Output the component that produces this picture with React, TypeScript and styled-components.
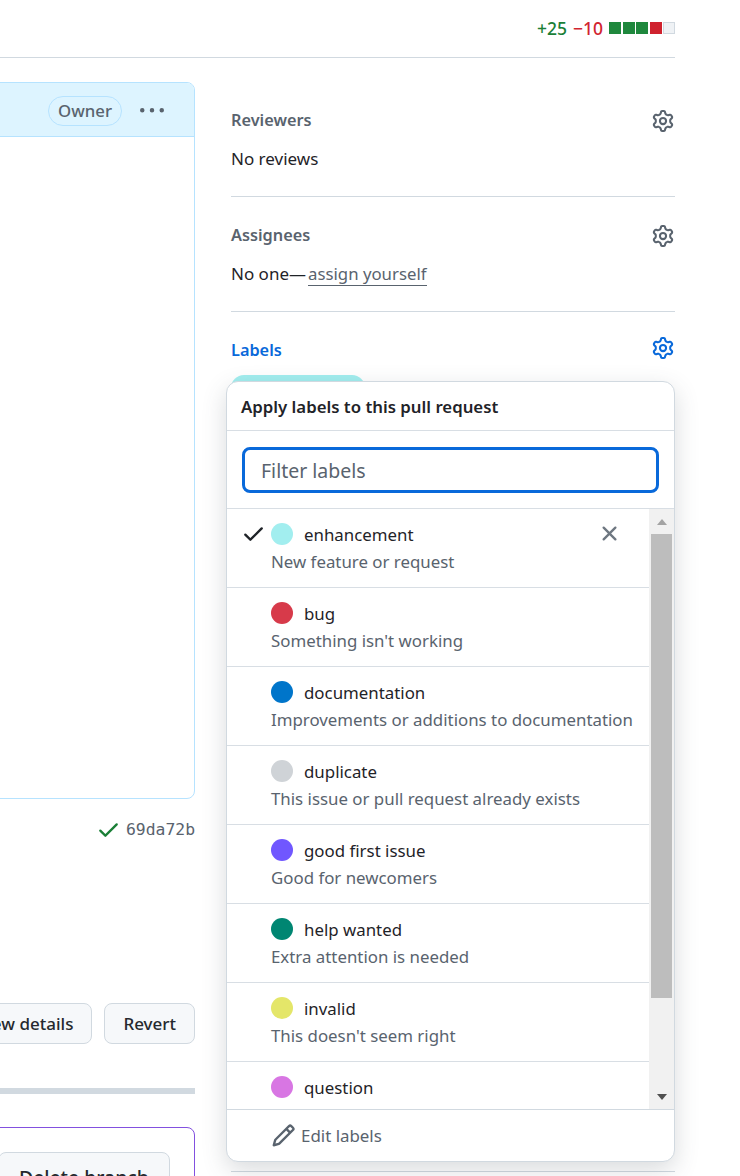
import React from 'react';
import styled, { createGlobalStyle } from 'styled-components';

const GlobalStyle = createGlobalStyle`
  html, body {
    margin: 0;
    padding: 0;
    background: #fff;
  }
  body {
    font-family: "Noto Sans", "Liberation Sans", sans-serif;
    color: #1f2328;
  }
`;

const ICONS = {
  gear: 'M8 0a8.2 8.2 0 0 1 .701.031C9.444.095 9.99.645 10.16 1.29l.288 1.107c.018.066.079.158.212.224.231.114.454.243.668.386.123.082.233.09.299.071l1.103-.303c.644-.176 1.392.021 1.82.63.27.385.506.792.704 1.218.315.675.111 1.422-.364 1.891l-.814.806c-.049.048-.098.147-.088.294.016.257.016.515 0 .772-.01.147.038.246.088.294l.814.806c.475.469.679 1.216.364 1.891a7.977 7.977 0 0 1-.704 1.217c-.428.61-1.176.807-1.82.63l-1.102-.302c-.067-.019-.177-.011-.3.071a5.909 5.909 0 0 1-.668.386c-.133.066-.194.158-.211.224l-.29 1.106c-.168.646-.715 1.196-1.458 1.26a8.006 8.006 0 0 1-1.402 0c-.743-.064-1.289-.614-1.458-1.26l-.289-1.106c-.018-.066-.079-.158-.212-.224a5.738 5.738 0 0 1-.668-.386c-.123-.082-.233-.09-.299-.071l-1.103.303c-.644.176-1.392-.021-1.82-.63a8.12 8.12 0 0 1-.704-1.218c-.315-.675-.111-1.422.363-1.891l.815-.806c.05-.048.098-.147.088-.294a6.214 6.214 0 0 1 0-.772c.01-.147-.038-.246-.088-.294l-.815-.806C.635 6.045.431 5.298.746 4.623a7.92 7.92 0 0 1 .704-1.217c.428-.61 1.176-.807 1.82-.63l1.102.302c.067.019.177.011.3-.071.214-.143.437-.272.668-.386.133-.066.194-.158.211-.224l.29-1.106C6.009.645 6.556.095 7.299.03 7.53.01 7.764 0 8 0Zm-.571 1.525c-.036.003-.108.036-.137.146l-.289 1.105c-.147.561-.549.967-.998 1.189-.173.086-.34.183-.5.29-.417.278-.97.423-1.529.27l-1.103-.303c-.109-.03-.175.016-.195.045-.22.312-.412.644-.573.99-.014.031-.021.11.059.19l.815.806c.411.406.562.957.53 1.456a4.709 4.709 0 0 0 0 .582c.032.499-.119 1.05-.53 1.456l-.815.806c-.081.08-.073.159-.059.19.162.346.353.677.573.989.02.03.085.076.195.046l1.102-.303c.56-.153 1.113-.008 1.53.27.161.107.328.204.501.29.447.222.85.629.997 1.189l.289 1.105c.029.109.101.143.137.146a6.6 6.6 0 0 0 1.142 0c.036-.003.108-.036.137-.146l.289-1.105c.147-.561.549-.967.998-1.189.173-.086.34-.183.5-.29.417-.278.97-.423 1.529-.27l1.103.303c.109.029.175-.016.195-.045.22-.313.411-.644.573-.99.014-.031.021-.11-.059-.19l-.815-.806c-.411-.406-.562-.957-.53-1.456a4.709 4.709 0 0 0 0-.582c-.032-.499.119-1.05.53-1.456l.815-.806c.081-.08.073-.159.059-.19a6.464 6.464 0 0 0-.573-.989c-.02-.03-.085-.076-.195-.046l-1.102.303c-.56.153-1.113.008-1.53-.27a4.44 4.44 0 0 0-.501-.29c-.447-.222-.85-.629-.997-1.189l-.289-1.105c-.029-.11-.101-.143-.137-.146a6.6 6.6 0 0 0-1.142 0ZM11 8a3 3 0 1 1-6 0 3 3 0 0 1 6 0ZM9.5 8a1.5 1.5 0 1 0-3.001.001A1.5 1.5 0 0 0 9.5 8Z',
  check: 'M13.78 4.22a.75.75 0 0 1 0 1.06l-7.25 7.25a.75.75 0 0 1-1.06 0L2.22 9.28a.751.751 0 0 1 .018-1.042.751.751 0 0 1 1.042-.018L6 10.94l6.72-6.72a.75.75 0 0 1 1.06 0Z',
  x: 'M3.72 3.72a.75.75 0 0 1 1.06 0L8 6.94l3.22-3.22a.749.749 0 0 1 1.275.326.749.749 0 0 1-.215.734L9.06 8l3.22 3.22a.749.749 0 0 1-.326 1.275.749.749 0 0 1-.734-.215L8 9.06l-3.22 3.22a.751.751 0 0 1-1.042-.018.751.751 0 0 1-.018-1.042L6.94 8 3.72 4.78a.75.75 0 0 1 0-1.06Z',
  pencil: 'M11.013 1.427a1.75 1.75 0 0 1 2.474 0l1.086 1.086a1.75 1.75 0 0 1 0 2.474l-8.61 8.61c-.21.21-.47.364-.756.445l-3.251.93a.75.75 0 0 1-.927-.928l.929-3.25c.081-.286.235-.547.445-.758l8.61-8.61Zm.176 4.823L9.75 4.81l-6.286 6.287a.253.253 0 0 0-.064.108l-.558 1.953 1.953-.558a.253.253 0 0 0 .108-.064Zm1.238-3.763a.25.25 0 0 0-.354 0L10.811 3.75l1.439 1.44 1.263-1.263a.25.25 0 0 0 0-.354Z',
  kebab: 'M8 9a1.5 1.5 0 1 0 0-3 1.5 1.5 0 0 0 0 3ZM1.5 9a1.5 1.5 0 1 0 0-3 1.5 1.5 0 0 0 0 3Zm13 0a1.5 1.5 0 1 0 0-3 1.5 1.5 0 0 0 0 3Z',
};

const Icon = ({ name, size }: { name: keyof typeof ICONS; size: number }) => (
  <svg width={size} height={size} viewBox="0 0 16 16" fill="currentColor" aria-hidden="true">
    <path d={ICONS[name]} />
  </svg>
);

const Page = styled.div`
  box-sizing: border-box;
  width: 740px;
  height: 1176px;
  overflow: hidden;
  padding-right: 65px;
`;

const DiffBar = styled.div`
  box-sizing: border-box;
  height: 58px;
  padding-top: 15px;
  border-bottom: 1px solid #d1d9e0;
  display: flex;
  justify-content: flex-end;
  align-items: flex-start;
  font-size: 17.5px;
  line-height: 26px;
  font-weight: 500;
`;

const Added = styled.span`
  color: #1a7f37;
`;

const Removed = styled.span`
  color: #d1242f;
  margin-left: 6px;
`;

const Blocks = styled.div`
  display: flex;
  gap: 1.5px;
  margin: 7px 0 0 6px;
`;

const Block = styled.span<{ $kind: 'add' | 'del' | 'none' }>`
  box-sizing: border-box;
  width: 12px;
  height: 12px;
  background: ${(p) => (p.$kind === 'add' ? '#1f883d' : p.$kind === 'del' ? '#cf222e' : '#eff2f5')};
  border: ${(p) => (p.$kind === 'none' ? '1px solid #d1d9e0' : 'none')};
`;

const Columns = styled.div`
  display: grid;
  grid-template-columns: 195px 444px;
  column-gap: 36px;
`;

const Main = styled.div`
  width: 195px;
  padding-top: 24px;
`;

const Comment = styled.div`
  box-sizing: border-box;
  height: 717px;
  margin-left: -20px;
  border: 1px solid #b6e3ff;
  border-radius: 8px;
`;

const CommentHeader = styled.div`
  box-sizing: border-box;
  height: 54px;
  padding: 2px 30px 0 0;
  background: #ddf4ff;
  border-bottom: 1px solid #b6e3ff;
  border-radius: 7px 7px 0 0;
  display: flex;
  justify-content: flex-end;
  align-items: center;
  gap: 18px;
  color: #59636e;
`;

const OwnerBadge = styled.span`
  box-sizing: border-box;
  height: 30px;
  padding: 0 9px;
  border: 1px solid #b6e3ff;
  border-radius: 15px;
  font-size: 16.8px;
  line-height: 27px;
  font-weight: 500;
`;

const CommitLine = styled.div`
  display: flex;
  justify-content: flex-end;
  align-items: center;
  gap: 5px;
  margin-top: 19px;
  height: 22px;
  color: #1a7f37;
`;

const CommitHash = styled.span`
  font-family: "DejaVu Sans Mono", "Liberation Mono", monospace;
  font-size: 16.4px;
  color: #59636e;
`;

const Actions = styled.div`
  display: flex;
  justify-content: flex-end;
  gap: 12px;
  margin-top: 163px;
`;

const Button = styled.button<{ $large?: boolean }>`
  flex: none;
  box-sizing: border-box;
  height: ${(p) => (p.$large ? 50 : 41)}px;
  padding: 0 ${(p) => (p.$large ? 20 : 18)}px;
  background: #f6f8fa;
  border: 1px solid #d1d9e0;
  border-radius: 8px;
  font: 500 ${(p) => (p.$large ? 19.4 : 17)}px "Noto Sans", sans-serif;
  color: #25292e;
  white-space: nowrap;
`;

const Rule = styled.div`
  height: 6px;
  margin: 44px 0 33px -20px;
  background: #d1d9e0;
`;

const MergeBox = styled.div`
  box-sizing: border-box;
  height: 120px;
  margin-left: -20px;
  padding: 24px 24px 0 0;
  border: 1px solid #8250df;
  border-radius: 8px;
  display: flex;
  justify-content: flex-end;
  align-items: flex-start;
`;

const Sidebar = styled.aside`
  position: relative;
  padding-top: 24px;
`;

const Section = styled.section<{ $height: number; $top?: number }>`
  box-sizing: border-box;
  height: ${(p) => p.$height}px;
  padding-top: ${(p) => p.$top ?? 0}px;
  border-bottom: 1px solid #d1d9e0;
  margin-bottom: 24px;
`;

const SectionHead = styled.div<{ $active?: boolean }>`
  display: flex;
  justify-content: space-between;
  align-items: center;
  height: 28px;
  font-size: 16.3px;
  font-weight: 600;
  color: ${(p) => (p.$active ? '#0969da' : '#59636e')};

  svg {
    margin: ${(p) => (p.$active ? '0 1px 4px 0' : '2px 1px 0 0')};
  }
`;

const SectionBody = styled.p`
  margin: 11px 0 0;
  font-size: 17px;
  line-height: 28px;
  color: #1f2328;
`;

const AssignLink = styled.span`
  margin-left: 2px;
  font-size: 16.8px;
  color: #59636e;
  border-bottom: 1px solid #59636e;
`;

const LabelPill = styled.div`
  width: 134px;
  height: 26px;
  margin-top: 11px;
  border-radius: 13px;
  background: #a2eeef;
`;

const Popover = styled.div`
  position: absolute;
  left: -5px;
  top: 323px;
  box-sizing: border-box;
  width: 449px;
  height: 781px;
  display: flex;
  flex-direction: column;
  background: #fff;
  border: 1px solid #d1d9e0;
  border-radius: 12px;
  box-shadow: 0 8px 24px rgba(66, 74, 83, 0.2);
  overflow: hidden;
`;

const PopoverTitle = styled.div`
  flex: none;
  box-sizing: border-box;
  height: 49px;
  padding-left: 14px;
  border-bottom: 1px solid #d8dee4;
  font-size: 16.8px;
  line-height: 49px;
  font-weight: 600;
`;

const FilterBar = styled.div`
  flex: none;
  box-sizing: border-box;
  height: 78px;
  padding: 16px 15px 0;
  border-bottom: 1px solid #d8dee4;
`;

const FilterInput = styled.input`
  box-sizing: border-box;
  display: block;
  width: 100%;
  height: 46px;
  padding: 0 16px;
  border: 3px solid #0969da;
  border-radius: 8px;
  outline: none;
  font: 400 19.5px "Noto Sans", sans-serif;
  &::placeholder {
    color: #59636e;
    opacity: 1;
  }
`;

const ListArea = styled.div`
  flex: 1;
  min-height: 0;
  display: flex;
`;

const LabelList = styled.ul`
  flex: 1;
  min-width: 0;
  margin: 0;
  padding: 0;
  list-style: none;
  overflow: hidden;
`;

const LabelRow = styled.li`
  box-sizing: border-box;
  height: 79px;
  padding: 13px 0 0 44px;
  position: relative;
  border-bottom: 1px solid #d8dee4;
`;

const CheckMark = styled.span`
  position: absolute;
  left: 14px;
  top: 12px;
  height: 25px;
  color: #1f2328;
`;

const RemoveMark = styled.span`
  position: absolute;
  right: 27px;
  top: 12px;
  height: 25px;
  color: #6e7781;
`;

const NameLine = styled.div`
  display: flex;
  align-items: center;
  gap: 11px;
  height: 24px;
  font-size: 16.85px;
`;

const Dot = styled.span<{ $color: string }>`
  width: 22px;
  height: 22px;
  border-radius: 50%;
  background: ${(p) => p.$color};
`;

const Description = styled.div`
  margin-top: 4px;
  font-size: 16.85px;
  line-height: 24px;
  color: #59636e;
  white-space: nowrap;
`;

const Scrollbar = styled.div`
  flex: none;
  width: 25px;
  display: flex;
  flex-direction: column;
  align-items: center;
  background: #f1f1f1;
`;

const ScrollEnd = styled.div`
  flex: none;
  height: 25px;
  width: 100%;
  display: flex;
  justify-content: center;
  align-items: center;
`;

const Arrow = styled.span<{ $down?: boolean }>`
  width: 0;
  height: 0;
  border-left: 5px solid transparent;
  border-right: 5px solid transparent;
  ${(p) => (p.$down ? 'border-top: 6px solid #505050;' : 'border-bottom: 6px solid #a3a3a3;')}
`;

const ScrollThumb = styled.div`
  flex: none;
  width: 21px;
  height: 464px;
  background: #bdbdbd;
`;

const ScrollGap = styled.div`
  flex: 1;
`;

const PopoverFooter = styled.div`
  flex: none;
  box-sizing: border-box;
  height: 52px;
  display: flex;
  align-items: center;
  gap: 5px;
  padding-left: 44px;
  border-top: 1px solid #d1d9e0;
  font-size: 16.9px;
  color: #59636e;
`;

const labels = [
  { name: 'enhancement', color: '#a2eeef', description: 'New feature or request', selected: true },
  { name: 'bug', color: '#d73a4a', description: "Something isn't working" },
  { name: 'documentation', color: '#0075ca', description: 'Improvements or additions to documentation' },
  { name: 'duplicate', color: '#cfd3d7', description: 'This issue or pull request already exists' },
  { name: 'good first issue', color: '#7057ff', description: 'Good for newcomers' },
  { name: 'help wanted', color: '#008672', description: 'Extra attention is needed' },
  { name: 'invalid', color: '#e4e669', description: "This doesn't seem right" },
  { name: 'question', color: '#d876e3', description: 'Further information is requested' },
];

const App = () => {
  return (
    <Page>
      <GlobalStyle />
      <DiffBar>
        <Added>+25</Added>
        <Removed>−10</Removed>
        <Blocks>
          <Block $kind="add" />
          <Block $kind="add" />
          <Block $kind="add" />
          <Block $kind="del" />
          <Block $kind="none" />
        </Blocks>
      </DiffBar>
      <Columns>
        <Main>
          <Comment>
            <CommentHeader>
              <OwnerBadge>Owner</OwnerBadge>
              <Icon name="kebab" size={24} />
            </CommentHeader>
          </Comment>
          <CommitLine>
            <Icon name="check" size={25} />
            <CommitHash>69da72b</CommitHash>
          </CommitLine>
          <Actions>
            <Button>View details</Button>
            <Button>Revert</Button>
          </Actions>
          <Rule />
          <MergeBox>
            <Button $large>Delete branch</Button>
          </MergeBox>
        </Main>
        <Sidebar>
          <Section $height={115} $top={24}>
            <SectionHead>
              Reviewers
              <Icon name="gear" size={22} />
            </SectionHead>
            <SectionBody>No reviews</SectionBody>
          </Section>
          <Section $height={91}>
            <SectionHead>
              Assignees
              <Icon name="gear" size={22} />
            </SectionHead>
            <SectionBody>
              No one—<AssignLink>assign yourself</AssignLink>
            </SectionBody>
          </Section>
          <Section $height={836}>
            <SectionHead $active>
              Labels
              <Icon name="gear" size={22} />
            </SectionHead>
            <LabelPill />
          </Section>
          <Popover>
            <PopoverTitle>Apply labels to this pull request</PopoverTitle>
            <FilterBar>
              <FilterInput placeholder="Filter labels" />
            </FilterBar>
            <ListArea>
              <LabelList>
                {labels.map((label) => (
                  <LabelRow key={label.name}>
                    {label.selected && (
                      <CheckMark>
                        <Icon name="check" size={25} />
                      </CheckMark>
                    )}
                    {label.selected && (
                      <RemoveMark>
                        <Icon name="x" size={25} />
                      </RemoveMark>
                    )}
                    <NameLine>
                      <Dot $color={label.color} />
                      {label.name}
                    </NameLine>
                    <Description>{label.description}</Description>
                  </LabelRow>
                ))}
              </LabelList>
              <Scrollbar>
                <ScrollEnd>
                  <Arrow />
                </ScrollEnd>
                <ScrollThumb />
                <ScrollGap />
                <ScrollEnd>
                  <Arrow $down />
                </ScrollEnd>
              </Scrollbar>
            </ListArea>
            <PopoverFooter>
              <Icon name="pencil" size={25} />
              Edit labels
            </PopoverFooter>
          </Popover>
        </Sidebar>
      </Columns>
    </Page>
  );
};

export default App;
